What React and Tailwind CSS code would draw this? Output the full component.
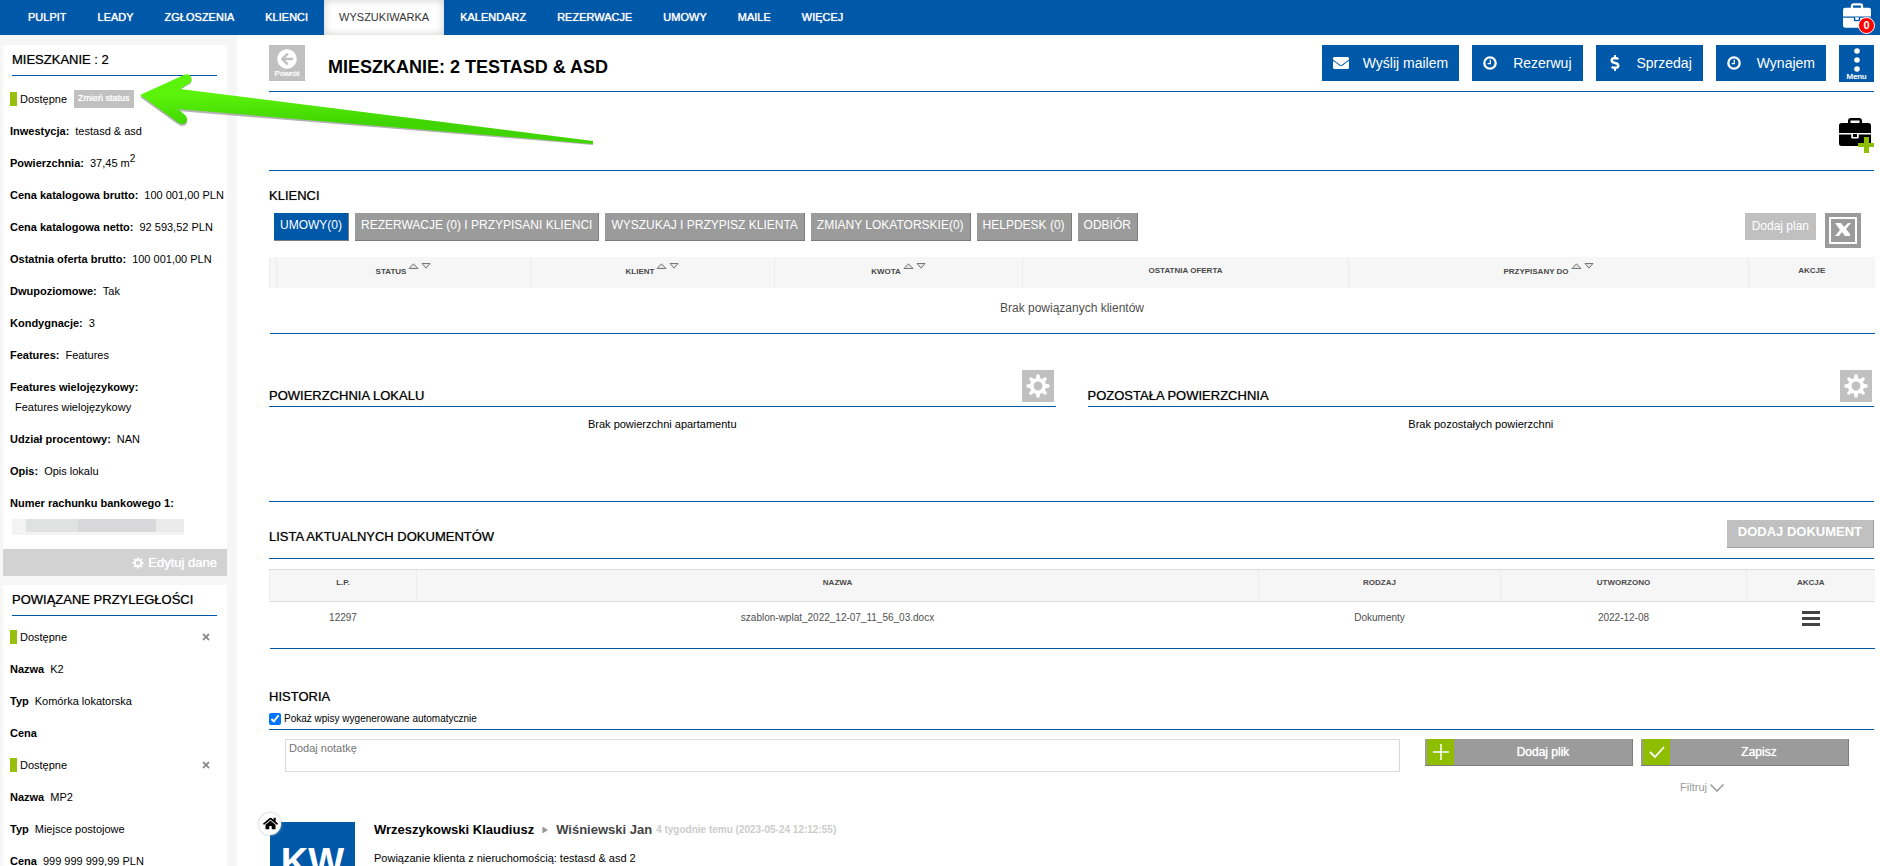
import React, { useState } from "react";
import { FaArrowCircleLeft, FaEnvelope, FaDollarSign, FaHome, FaTimes, FaPlay } from "react-icons/fa";

const navItems = ["PULPIT", "LEADY", "ZGŁOSZENIA", "KLIENCI", "WYSZUKIWARKA", "KALENDARZ", "REZERWACJE", "UMOWY", "MAILE", "WIĘCEJ"];

const tabs = [
  "UMOWY(0)",
  "REZERWACJE (0) I PRZYPISANI KLIENCI",
  "WYSZUKAJ I PRZYPISZ KLIENTA",
  "ZMIANY LOKATORSKIE(0)",
  "HELPDESK (0)",
  "ODBIÓR",
];

const details = [
  { label: "Inwestycja:", value: "testasd & asd" },
  { label: "Powierzchnia:", value: <>37,45 m<sup className="text-[10px]">2</sup></> },
  { label: "Cena katalogowa brutto:", value: "100 001,00 PLN" },
  { label: "Cena katalogowa netto:", value: "92 593,52 PLN" },
  { label: "Ostatnia oferta brutto:", value: "100 001,00 PLN" },
  { label: "Dwupoziomowe:", value: "Tak" },
  { label: "Kondygnacje:", value: "3" },
  { label: "Features:", value: "Features" },
];

const related = [
  { name: "K2", type: "Komórka lokatorska", price: "" },
  { name: "MP2", type: "Miejsce postojowe", price: "999 999 999,99 PLN" },
];

const documents = [
  { id: "12297", name: "szablon-wplat_2022_12-07_11_56_03.docx", kind: "Dokumenty", created: "2022-12-08" },
];

function Briefcase({ className, line }) {
  return (
    <svg viewBox="0 0 32 28" className={className} fill="currentColor" aria-hidden="true">
      <path d="M9 6V3a3 3 0 0 1 3-3h8a3 3 0 0 1 3 3v3h-2.500V2.500h-9V6z" />
      <path d="M2.500 5h27A2.500 2.500 0 0 1 32 7.500V15H0V7.500A2.500 2.500 0 0 1 2.500 5z" />
      <path d="M0 16.500h12.500V20h7v-3.500H32v9a2.500 2.500 0 0 1-2.500 2.500h-27A2.500 2.500 0 0 1 0 25.500z" />
      <path d="M12.500 16h7v4.500h-7z" fill={line} />
      <path d="M14 16h4v3h-4z" />
    </svg>
  );
}

function ClockIcon() {
  return (
    <svg viewBox="0 0 14 14" className="h-[14px] w-[14px]" fill="none" stroke="currentColor" aria-hidden="true">
      <circle cx="7" cy="7" r="5.700" strokeWidth="2.300" />
      <path d="M7.300 3.800V7.600H4.600" strokeWidth="1.300" />
    </svg>
  );
}

function Gear({ className }) {
  const teeth = [0, 45, 90, 135, 180, 225, 270, 315];
  return (
    <svg viewBox="0 0 24 24" className={className} aria-hidden="true">
      <circle cx="12" cy="12" r="6.300" fill="none" stroke="currentColor" strokeWidth="3.600" />
      {teeth.map((a) => (
        <path key={a} d="M10.600 0.500h2.800l0.800 4.500h-4.400z" fill="currentColor" transform={`rotate(${a} 12 12)`} />
      ))}
    </svg>
  );
}

function SortArrows() {
  return (
    <svg viewBox="0 0 23 6" className="ml-[2px] inline-block h-[6px] w-[23px] align-[5px]" fill="#e4e4e4" stroke="#777" aria-hidden="true">
      <path d="M1 5.500L5.500 0.800L10 5.500z" />
      <path d="M14 0.500h8L18 5.200z" />
    </svg>
  );
}

function CardTitle({ children }) {
  return (
    <h2 className="mb-[5px] ml-[9px] mr-[10px] flex h-[31px] items-center whitespace-nowrap border-b border-[#0058a8] text-[13px] font-normal [text-shadow:0_0_1px_#0008]">
      {children}
    </h2>
  );
}

function SectionTitle({ children, className }) {
  return <h2 className={`text-[13px] font-normal text-black [text-shadow:0_0_1px_#0008] ${className}`}>{children}</h2>;
}

function Detail({ label, value }) {
  return (
    <div className="flex h-8 items-center gap-[6px] whitespace-nowrap pl-[7px]">
      <span className="font-bold">{label}</span>
      <span>{value}</span>
    </div>
  );
}

function Available({ children }) {
  return (
    <div className="flex h-8 items-center pl-[7px]">
      <span className="mr-[3px] h-[14px] w-[7px] bg-[#97bf0d]" />
      <span>Dostępne</span>
      {children}
    </div>
  );
}

function ActionButton({ icon, children }) {
  return (
    <button className="flex h-9 items-center whitespace-nowrap bg-[#0058a8] px-[11px] text-sm text-white">
      <span className="mr-[14px] flex w-4 items-center">{icon}</span>
      {children}
    </button>
  );
}

function AreaBox({ title, empty }) {
  return (
    <div>
      <div className="flex h-[73px] items-end justify-between border-b border-[#0058a8] pb-1 pr-[2px]">
        <SectionTitle className="leading-3">{title}</SectionTitle>
        <button aria-label="Ustawienia" className="flex h-8 w-8 items-center justify-center bg-[#c0c0c0] text-white">
          <Gear className="h-6 w-6" />
        </button>
      </div>
      <p className="pt-[9px] text-center text-[11px] leading-4">{empty}</p>
    </div>
  );
}

function Sidebar() {
  return (
    <aside className="w-[237px] shrink-0 bg-[#f6f6f6] pl-[3px] pr-[10px] pt-[10px] text-[11px]">
      <section className="bg-white">
        <CardTitle>MIESZKANIE : 2</CardTitle>
        <div className="pt-[2px]">
          <Available>
            <button className="ml-[7px] h-[18px] bg-[#c0c0c0] px-1 text-[9px] text-white [text-shadow:0_0_1px_#fff]">Zmień status</button>
          </Available>
          {details.map((d) => (
            <Detail key={d.label} label={d.label} value={d.value} />
          ))}
          <div className="pb-1 pl-[7px] pt-2">
            <p className="font-bold leading-4">Features wielojęzykowy:</p>
            <p className="pl-[5px] leading-6">Features wielojęzykowy</p>
          </div>
          <Detail label="Udział procentowy:" value="NAN" />
          <Detail label="Opis:" value="Opis lokalu" />
          <Detail label="Numer rachunku bankowego 1:" />
        </div>
        <div className="ml-[9px] flex h-[16px] w-[172px] bg-[#f3f3f3]">
          <span className="ml-[14px] h-[13px] w-[52px] bg-[#e0e1e1]" />
          <span className="h-[13px] w-[78px] bg-[#d8d8da]" />
          <span className="h-[13px] flex-1 bg-[#ebebeb]" />
        </div>
        <button className="mt-[14px] flex h-[27px] w-full items-center justify-end gap-1 bg-[#d2d2d2] pr-[10px] text-[13px] text-white [text-shadow:0_0_1px_#fff]">
          <Gear className="h-3 w-3" />
          Edytuj dane
        </button>
      </section>

      <section className="mt-[9px] bg-white pb-4">
        <CardTitle>POWIĄZANE PRZYLEGŁOŚCI</CardTitle>
        {related.map((item) => (
          <div key={item.name}>
            <Available>
              <button aria-label="Usuń" className="ml-auto mr-4 text-[#888]">
                <FaTimes size={10} />
              </button>
            </Available>
            <Detail label="Nazwa" value={item.name} />
            <Detail label="Typ" value={item.type} />
            <Detail label="Cena" value={item.price} />
          </div>
        ))}
      </section>
    </aside>
  );
}

function ClientsTable() {
  const th = "h-[31px] border-l border-[#ececec] pb-1 text-[8px] font-bold text-[#4a4a4a]";
  return (
    <table className="w-full table-fixed border-b border-[#0058a8]">
      <colgroup>
        <col className="w-[7px]" />
        <col className="w-[254px]" />
        <col className="w-[244px]" />
        <col className="w-[248px]" />
        <col className="w-[326px]" />
        <col className="w-[400px]" />
        <col className="w-[126px]" />
      </colgroup>
      <thead className="bg-[#f6f6f6]">
        <tr>
          <th className={th}></th>
          <th className={th}>STATUS<SortArrows /></th>
          <th className={th}>KLIENT<SortArrows /></th>
          <th className={th}>KWOTA<SortArrows /></th>
          <th className={th}>OSTATNIA OFERTA</th>
          <th className={th}>PRZYPISANY DO<SortArrows /></th>
          <th className={th}>AKCJE</th>
        </tr>
      </thead>
      <tbody>
        <tr>
          <td colSpan={7} className="h-[45px] pb-1 text-center text-xs text-[#4f4f4f]">
            Brak powiązanych klientów
          </td>
        </tr>
      </tbody>
    </table>
  );
}

function DocumentsTable() {
  const th = "h-8 border-l border-y border-x-[#ececec] border-y-[#dcdcdc] pb-1 text-[8px] font-bold text-[#4a4a4a]";
  const td = "h-[47px] pt-2 text-center align-top text-[10px] leading-4 text-[#4f4f4f]";
  return (
    <table className="mt-[10px] w-full table-fixed border-b border-[#0058a8]">
      <colgroup>
        <col className="w-[147px]" />
        <col className="w-[842px]" />
        <col className="w-[242px]" />
        <col className="w-[246px]" />
        <col className="w-[128px]" />
      </colgroup>
      <thead className="bg-[#f6f6f6]">
        <tr>
          <th className={th}>L.P.</th>
          <th className={th}>NAZWA</th>
          <th className={th}>RODZAJ</th>
          <th className={th}>UTWORZONO</th>
          <th className={th}>AKCJA</th>
        </tr>
      </thead>
      <tbody>
        {documents.map((doc) => (
          <tr key={doc.id}>
            <td className={td}>{doc.id}</td>
            <td className={td}>{doc.name}</td>
            <td className={td}>{doc.kind}</td>
            <td className={td}>{doc.created}</td>
            <td className={td}>
              <button aria-label="Akcje" className="text-[#444]">
                <svg viewBox="0 0 18 16" className="h-4 w-[18px]" fill="currentColor">
                  <path d="M0 1h18v3H0zM0 7h18v3H0zM0 13h18v3H0z" />
                </svg>
              </button>
            </td>
          </tr>
        ))}
      </tbody>
    </table>
  );
}

function FormButton({ icon, children }) {
  return (
    <button className="flex h-[27px] w-[208px] items-center border-b border-r border-[#7d7d7d] bg-[#9b9b9b] pl-[2px] text-xs text-white [text-shadow:0_0_1px_#fff]">
      <span className="flex h-full w-[27px] items-center justify-center bg-[#8fbe00]">{icon}</span>
      <span className="flex-1 text-center">{children}</span>
    </button>
  );
}

// Green pointer lying over the page, aimed at the "Zmień status" button
function Pointer() {
  return (
    <svg viewBox="0 0 460 56" className="pointer-events-none absolute left-[137px] top-[72px] h-[56px] w-[460px] overflow-visible" aria-hidden="true">
      <defs>
        <linearGradient id="pointer-fill" x1="0" y1="0" x2="0.100" y2="1">
          <stop offset="0.300" stopColor="#5cf30a" />
          <stop offset="0.750" stopColor="#40d400" />
        </linearGradient>
      </defs>
      <g>
        <path
          d="M3 24L47 3C51 1 55 4 54.500 8C54.500 10 53 11 51 12L43 17L456 70L456 72L41 38L48 44C52 48 50 53 45 53C43 53 41 51 39 50z"
          fill="#555"
          opacity="0.450"
          transform="translate(0 1)"
        />
        <path
          d="M3 23L47 3C51 1 55 4 54.500 8C54.500 10 53 11 51 12L43 17L456 69L456 72L41 37L48 43C52 47 50 52 45 52C43 52 41 51 39 49z"
          fill="url(#pointer-fill)"
        />
      </g>
    </svg>
  );
}

export default function App() {
  const [activeTab, setActiveTab] = useState(tabs[0]);
  const [showAuto, setShowAuto] = useState(true);

  return (
    <div className="relative flex h-screen flex-col overflow-hidden bg-white font-['Liberation_Sans',Arial,sans-serif] text-black">
      {/* Top navigation */}
      <header className="flex h-[35px] shrink-0 justify-between bg-[#0058a8] pl-[13px] pr-[9px]">
        <nav className="flex gap-px text-[11px] text-white">
          {navItems.map((item) => (
            <a
              key={item}
              href="#"
              className={`flex items-center px-[15px] ${
                item === "WYSZUKIWARKA" ? "bg-white text-[#333] shadow-[inset_0_0_8px_#ccc]" : "[text-shadow:0_0_1px_#fff]"
              }`}
            >
              {item}
            </a>
          ))}
        </nav>
        <button aria-label="Teczka" className="relative flex h-[30px] items-start pt-[3px] text-white">
          <Briefcase className="h-[25px] w-7" line="#0058a8" />
          <span className="absolute -bottom-1 -right-1 flex h-[17px] w-[17px] items-center justify-center rounded-full border border-white bg-[#f00] text-[11px] font-bold">
            0
          </span>
        </button>
      </header>

      <div className="flex min-h-0 flex-1">
        <Sidebar />

        <main className="min-w-0 flex-1 pl-8 pr-[6px]">
          <div className="flex h-[57px] items-center border-b border-[#0058a8]">
            <button className="flex h-9 w-9 flex-col items-center justify-end bg-[#c0c0c0] pb-[2px] text-[8px] leading-[10px] text-white [text-shadow:0_0_1px_#fff]">
              <FaArrowCircleLeft size={20} />
              Powrót
            </button>
            <h1 className="ml-[23px] pt-[7px] text-lg font-bold">MIESZKANIE: 2 TESTASD &amp; ASD</h1>
            <div className="ml-auto flex items-center gap-[13px]">
              <ActionButton icon={<FaEnvelope size={16} />}>Wyślij mailem</ActionButton>
              <ActionButton icon={<ClockIcon />}>Rezerwuj</ActionButton>
              <ActionButton icon={<FaDollarSign size={16} />}>Sprzedaj</ActionButton>
              <ActionButton icon={<ClockIcon />}>Wynajem</ActionButton>
              <button className="flex h-[37px] w-[35px] flex-col items-center bg-[#0058a8] pt-[3px] text-[8px] leading-[8px] text-white [text-shadow:0_0_1px_#fff]">
                <svg viewBox="0 0 6 24" className="mb-px h-6 w-[6px]" fill="currentColor" aria-hidden="true">
                  <circle cx="3" cy="3" r="2.800" />
                  <circle cx="3" cy="12" r="2.800" />
                  <circle cx="3" cy="21" r="2.800" />
                </svg>
                Menu
              </button>
            </div>
          </div>

          <div className="flex h-[79px] items-center justify-end border-b border-[#0058a8]">
            <button aria-label="Dodaj do teczki" className="relative mt-2 flex h-[35px] w-[35px] items-start">
              <Briefcase className="h-7 w-8" line="#fff" />
              <svg viewBox="0 0 16 16" className="absolute bottom-0 right-0 h-4 w-4" fill="#8fbe00">
                <path d="M6 0h5v6h5v4h-5v6H6v-6H0V6h6z" />
              </svg>
            </button>
          </div>

          {/* Clients */}
          <SectionTitle className="pb-[9px] pt-[17px] leading-4">KLIENCI</SectionTitle>
          <div className="flex h-11 items-start gap-[6px] pl-[5px] pr-[13px] text-xs text-white [text-shadow:0_0_1px_#fff8]">
            {tabs.map((tab) => (
              <button
                key={tab}
                onClick={() => setActiveTab(tab)}
                className={`h-7 whitespace-nowrap border-b border-r border-[#7d7d7d] px-[6px] pb-1 ${
                  tab === activeTab ? "bg-[#0058a8]" : "bg-[#9b9b9b]"
                }`}
              >
                {tab}
              </button>
            ))}
            <button className="ml-auto h-[27px] bg-[#c0c0c0] px-[7px] pb-[2px]">Dodaj plan</button>
            <button aria-label="Eksport do Excela" className="ml-[3px] h-[35px] w-9 bg-[#9b9b9b]">
              <svg viewBox="0 0 36 35" className="h-[35px] w-9">
                <path d="M5 5h26v25H5z" fill="none" stroke="#fff" strokeWidth="2" />
                <path d="M10 10h6l3 4l4-4h3l-5 6l4 5v2h-5l-3-4l-3 4h-4l5-6z" fill="#fff" />
              </svg>
            </button>
          </div>
          <ClientsTable />

          {/* Areas */}
          <div className="grid h-[168px] grid-cols-2 gap-8 border-b border-[#0058a8]">
            <AreaBox title="POWIERZCHNIA LOKALU" empty="Brak powierzchni apartamentu" />
            <AreaBox title="POZOSTAŁA POWIERZCHNIA" empty="Brak pozostałych powierzchni" />
          </div>

          {/* Documents */}
          <div className="flex h-[57px] items-end justify-between border-b border-[#0058a8] pb-[10px]">
            <SectionTitle className="leading-[22px]">LISTA AKTUALNYCH DOKUMENTÓW</SectionTitle>
            <button className="h-7 border-b border-r border-[#a0a0a0] bg-[#c0c0c0] px-[11px] pb-[2px] text-[13px] font-bold text-white">
              DODAJ DOKUMENT
            </button>
          </div>
          <DocumentsTable />

          {/* History */}
          <div className="border-b border-[#0058a8] pb-[2px] pt-10">
            <SectionTitle className="leading-4">HISTORIA</SectionTitle>
            <label className="mt-[6px] flex items-center gap-[3px] text-[10px] leading-4">
              <input type="checkbox" checked={showAuto} onChange={(e) => setShowAuto(e.target.checked)} className="h-3 w-3 accent-[#0075ff]" />
              Pokaż wpisy wygenerowane automatycznie
            </label>
          </div>

          <div className="flex items-start gap-[25px] pl-4 pr-[25px] pt-[9px]">
            <textarea
              aria-label="Dodaj notatkę"
              placeholder="Dodaj notatkę"
              className="h-[33px] min-w-0 flex-1 resize-none border border-[#d9d9d9] px-[3px] text-[11px] leading-4 placeholder:text-[#757575]"
            />
            <div>
              <div className="flex gap-2">
                <FormButton
                  icon={
                    <svg viewBox="0 0 16 16" className="h-4 w-4" stroke="#fff" strokeWidth="1.500">
                      <path d="M8 0v16M0 8h16" />
                    </svg>
                  }
                >
                  Dodaj plik
                </FormButton>
                <FormButton
                  icon={
                    <svg viewBox="0 0 16 12" className="h-3 w-4" fill="none" stroke="#fff" strokeWidth="1.800">
                      <path d="M1 6l5 5L15 1" />
                    </svg>
                  }
                >
                  Zapisz
                </FormButton>
              </div>
              <button className="ml-auto mr-[125px] mt-[14px] flex h-4 items-center gap-[3px] text-[11px] text-[#999]">
                Filtruj
                <svg viewBox="0 0 14 8" className="h-2 w-[14px]" fill="none" stroke="#999" strokeWidth="1.500">
                  <path d="M0.500 0.500L7 7L13.500 0.500" />
                </svg>
              </button>
            </div>
          </div>

          <article className="mt-[26px] flex gap-[19px] pl-px">
            <div className="relative h-[85px] w-[85px] shrink-0 bg-[#0058a8] pt-5 text-center text-[38px] font-bold leading-10 text-white">
              KW
              <span className="absolute -left-[11px] -top-[9px] flex h-[22px] w-[22px] items-center justify-center rounded-full bg-white text-black shadow-[0_0_3px_#bbb]">
                <FaHome size={15} />
              </span>
            </div>
            <div>
              <p className="flex items-center text-[13px] font-bold leading-4">
                Wrzeszykowski Klaudiusz
                <FaPlay size={6} className="mx-2 text-[#999]" />
                <span className="text-[#444]">Wiśniewski Jan</span>
                <span className="ml-1 text-[10px] text-[#ccc]">4 tygodnie temu (2023-05-24 12:12:55)</span>
              </p>
              <p className="mt-3 text-[11px] leading-4">Powiązanie klienta z nieruchomością: testasd &amp; asd 2</p>
            </div>
          </article>
        </main>
      </div>

      <Pointer />
    </div>
  );
}
